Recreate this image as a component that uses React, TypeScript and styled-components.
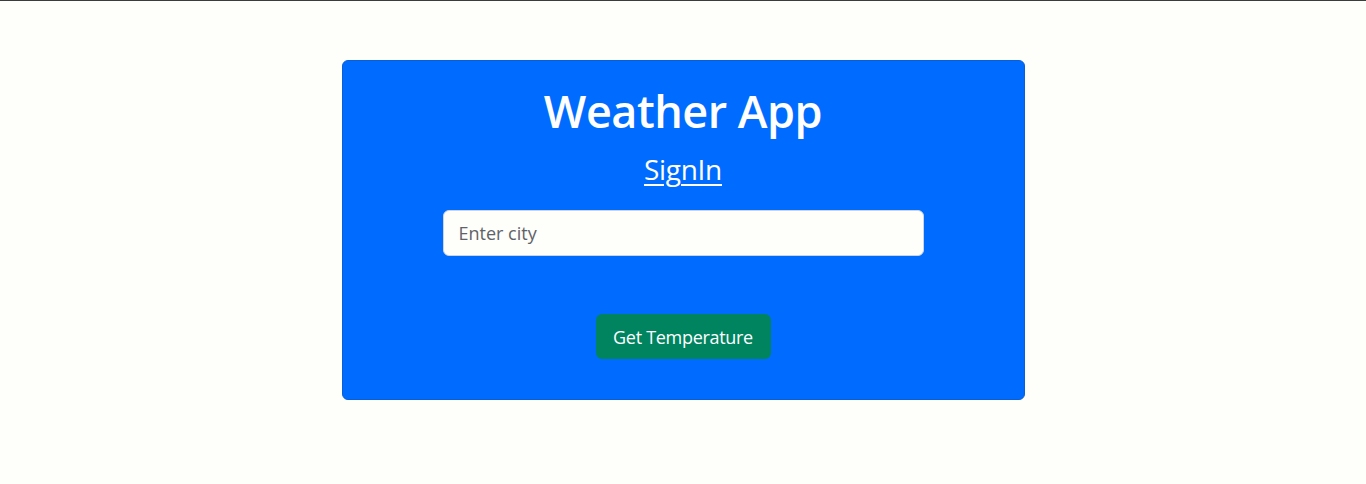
import React from "react";
import styled, { createGlobalStyle } from "styled-components";

const Global = createGlobalStyle`
  html, body { margin: 0; padding: 0; }
  body {
    background: #fefefb;
    font-family: "Open Sans", "Noto Sans", sans-serif;
    border-top: 1px solid #3a3d3b;
  }
`;

const Page = styled.div`
  display: flex;
  justify-content: center;
  padding-top: 59px;
`;

const Card = styled.div`
  width: 683px;
  height: 340px;
  box-sizing: border-box;
  background: #006cff;
  border: 1px solid #0a5fd6;
  border-radius: 6px;
  display: flex;
  flex-direction: column;
  align-items: center;
  padding-top: 20px;
`;

const Title = styled.h1`
  margin: 0;
  color: #fff;
  font-size: 45px;
  font-weight: 600;
  line-height: 60px;
  letter-spacing: -0.5px;
`;

const SignLink = styled.a`
  margin-top: 7px;
  color: #fff;
  font-size: 28px;
  line-height: 42px;
  text-decoration: underline;
  text-underline-offset: 4px;
  text-decoration-thickness: 2px;
  letter-spacing: -0.3px;
`;

const CityInput = styled.input`
  margin-top: 20px;
  width: 481px;
  height: 46px;
  box-sizing: border-box;
  border: 1px solid #cfd4da;
  border-radius: 6px;
  background: #fefefb;
  padding: 0 15px;
  font-family: "Open Sans", "Noto Sans", sans-serif;
  font-size: 18px;
  color: #212529;
  outline: none;
  &::placeholder { color: #5f6368; }
`;

const Button = styled.button`
  margin-top: 58px;
  height: 45px;
  width: 175px;
  box-sizing: border-box;
  border: none;
  border-radius: 6px;
  background: #00845f;
  color: #fff;
  font-family: "Open Sans", "Noto Sans", sans-serif;
  font-size: 18px;
  letter-spacing: -0.3px;
  cursor: pointer;
`;

export default function App() {
  return (
    <>
      <Global />
      <Page>
        <Card>
          <Title>Weather App</Title>
          <SignLink href="#">SignIn</SignLink>
          <CityInput placeholder="Enter city" />
          <Button>Get Temperature</Button>
        </Card>
      </Page>
    </>
  );
}
